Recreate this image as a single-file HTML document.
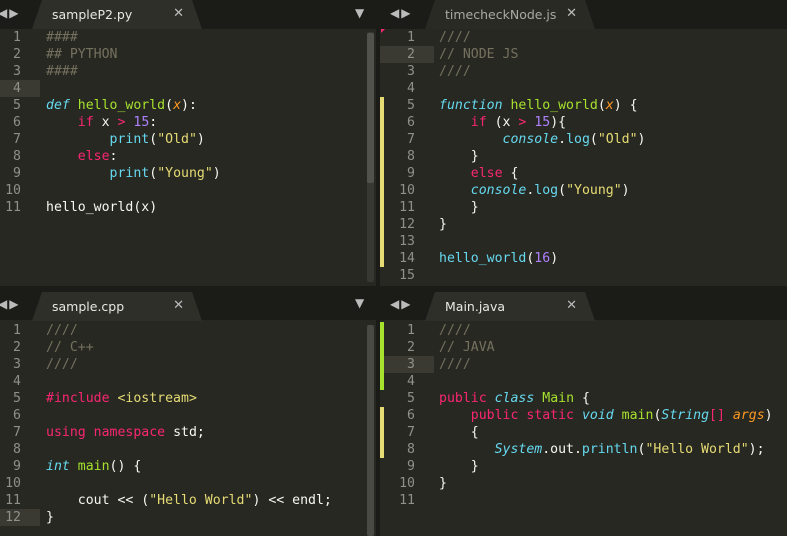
<!DOCTYPE html>
<html><head><meta charset="utf-8"><style>
*{margin:0;padding:0;box-sizing:border-box}
body{width:787px;height:536px;background:#272822;position:relative;overflow:hidden;font-family:"DejaVu Sans Mono","Liberation Mono",monospace;font-size:13.2px;color:#f8f8f2}
.abs{position:absolute}
.bar{position:absolute;background:#1b1b18}
.tab{position:absolute;height:29px;background:#2c2c27;clip-path:polygon(0 100%,10px 0,calc(100% - 10px) 0,100% 100%);font-family:"DejaVu Sans","Liberation Sans",sans-serif;font-size:12.5px;color:#e8e8e2}
.tab span{position:absolute;left:20px;top:7px}
.tab i{position:absolute;right:18px;top:6px;font-style:normal;color:#bbb;font-size:13px}
.arr{position:absolute;color:#bbb;font-size:12px;font-family:"DejaVu Sans",sans-serif;letter-spacing:2px}
.ln{position:absolute;height:17px;line-height:17px;white-space:pre;color:#8f908a;text-align:right}
.cd{position:absolute;height:17px;line-height:17px;white-space:pre}
.c{color:#75715e}.k{color:#f92672}.f{color:#a6e22e}.t{color:#66d9ef;font-style:italic}.p{color:#fd971f;font-style:italic}.n{color:#ae81ff}.s{color:#e6db74}.b{color:#66d9ef}
.hl{position:absolute;background:#3b3a32;height:17px}
</style></head><body>
<div class="bar" style="left:0;top:0;width:787px;height:29px"></div>
<div class="bar" style="left:0;top:286px;width:787px;height:34px"></div>
<div class="abs" style="left:376px;top:0;width:4px;height:536px;background:#1b1b18"></div>
<div class="arr" style="left:-2px;top:6px">◀▶</div>
<div class="arr" style="left:390px;top:6px">◀▶</div>
<div class="arr" style="left:-2px;top:297px">◀▶</div>
<div class="arr" style="left:390px;top:297px">◀▶</div>
<div class="arr" style="left:355px;top:6px">▼</div>
<div class="arr" style="left:355px;top:296px">▼</div>
<div class="tab" style="left:32px;top:0;width:170px;background:#2f2f2a"><span>sampleP2.py</span><i>✕</i></div>
<div class="tab" style="left:425px;top:0;width:170px;background:#2a2a25;color:#aaa"><span style="color:#a9a9a3">timecheckNode.js</span><i>✕</i></div>
<div class="tab" style="left:32px;top:292px;width:170px;background:#2f2f2a"><span>sample.cpp</span><i>✕</i></div>
<div class="tab" style="left:425px;top:292px;width:170px;background:#2f2f2a"><span>Main.java</span><i>✕</i></div>

<div class="abs" style="left:367px;top:32px;width:7px;height:250px;background:#383833;border-radius:2px"></div>
<div class="abs" style="left:367px;top:33px;width:7px;height:150px;background:#52524c;border-radius:2px"></div>
<div class="abs" style="left:367px;top:325px;width:7px;height:211px;background:#4a4a44;border-radius:2px"></div>
<div class="abs" style="left:380px;top:97px;width:4px;height:170px;background:#e6db74"></div>
<div class="abs" style="left:380px;top:322px;width:4px;height:68px;background:#a6e22e"></div>
<div class="abs" style="left:380px;top:407px;width:4px;height:51px;background:#e6db74"></div>
<div class="abs" style="left:381px;top:29px;width:0;height:0;border-top:4px solid #f92672;border-right:4px solid transparent"></div>
<div class="hl" style="left:0;top:80px;width:40px"></div>
<div class="hl" style="left:380px;top:46px;width:54px"></div>
<div class="hl" style="left:0;top:509px;width:40px"></div>
<div class="hl" style="left:384px;top:356px;width:50px"></div>

<div class="ln" style="left:0;top:29px;width:21px">1
2
3
4
5
6
7
8
9
10
11</div>
<div class="cd" style="left:46px;top:29px"><span class="c">####
## PYTHON
####</span>

<span class="t">def</span> <span class="f">hello_world</span>(<span class="p">x</span>):
    <span class="k">if</span> x <span class="k">&gt;</span> <span class="n">15</span>:
        <span class="b">print</span>(<span class="s">"Old"</span>)
    <span class="k">else</span>:
        <span class="b">print</span>(<span class="s">"Young"</span>)

hello_world(x)</div>

<div class="ln" style="left:386px;top:29px;width:29px">1
2
3
4
5
6
7
8
9
10
11
12
13
14
15</div>
<div class="cd" style="left:439px;top:29px"><span class="c">////
// NODE JS
////</span>

<span class="t">function</span> <span class="f">hello_world</span>(<span class="p">x</span>) {
    <span class="k">if</span> (x <span class="k">&gt;</span> <span class="n">15</span>){
        <span class="t">console</span>.<span class="b">log</span>(<span class="s">"Old"</span>)
    }
    <span class="k">else</span> {
    <span class="t">console</span>.<span class="b">log</span>(<span class="s">"Young"</span>)
    }
}

<span class="b">hello_world</span>(<span class="n">16</span>)
</div>

<div class="ln" style="left:0;top:322px;width:21px">1
2
3
4
5
6
7
8
9
10
11
12</div>
<div class="cd" style="left:46px;top:322px"><span class="c">////
// C++
////</span>

<span class="k">#include</span> <span class="s">&lt;iostream&gt;</span>

<span class="k">using</span> <span class="k">namespace</span> std;

<span class="t">int</span> <span class="f">main</span>() {

    cout &lt;&lt; (<span class="s">"Hello World"</span>) &lt;&lt; endl;
}</div>

<div class="ln" style="left:386px;top:322px;width:29px">1
2
3
4
5
6
7
8
9
10
11</div>
<div class="cd" style="left:439px;top:322px"><span class="c">////
// JAVA
////</span>

<span class="k">public</span> <span class="t">class</span> <span class="f">Main</span> {
    <span class="k">public</span> <span class="k">static</span> <span class="t">void</span> <span class="f">main</span>(<span class="t">String</span><span class="k">[]</span> <span class="p">args</span>)
    {
       <span class="t">System</span>.out.<span class="b">println</span>(<span class="s">"Hello World"</span>);
    }
}
</div>
</body></html>
